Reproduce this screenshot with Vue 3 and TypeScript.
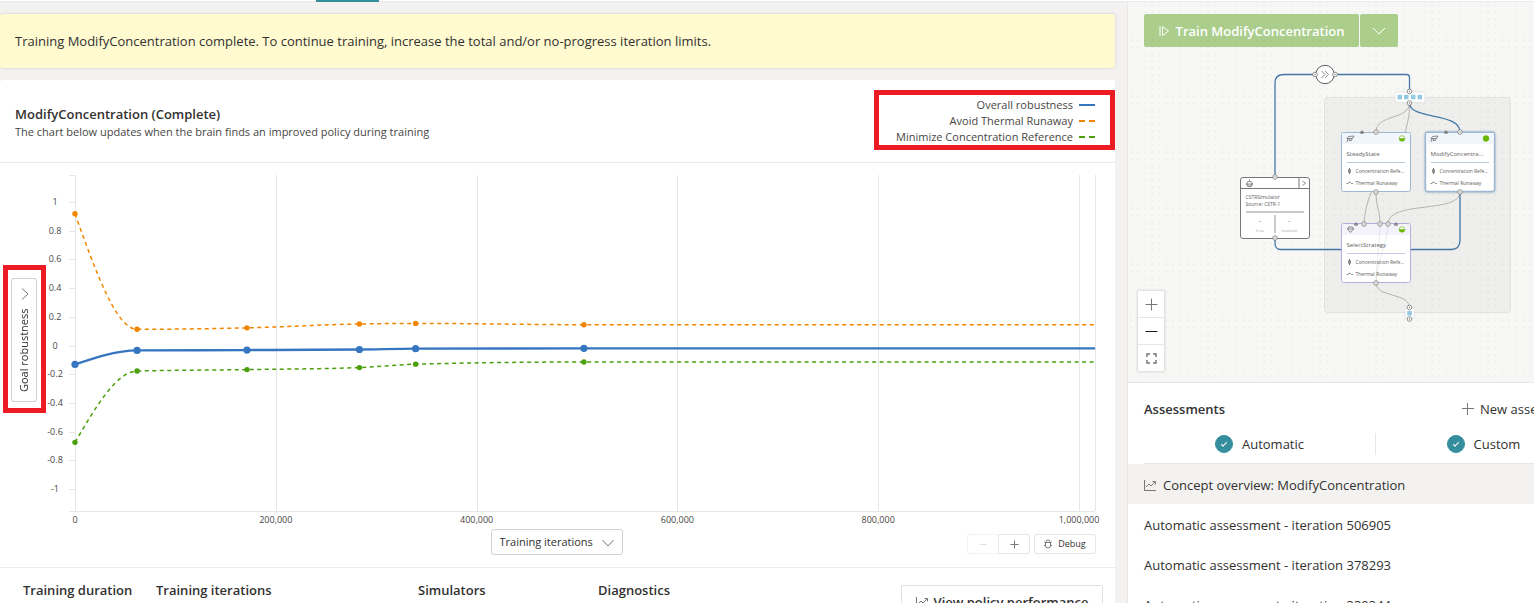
<script setup lang="ts">
import { ref } from 'vue'

type Point = [number, number]

interface Series {
  name: string
  color: string
  width: number
  radius: number
  dashed: boolean
  values: number[]
}

const iterations = [0, 61800, 171300, 283300, 339300, 506905, 1016000]

const series: Series[] = [
  { name: 'Overall robustness', color: '#3676c0', width: 2.4, radius: 3.6, dashed: false, values: [-0.132, -0.034, -0.032, -0.028, -0.022, -0.02, -0.02] },
  { name: 'Avoid Thermal Runaway', color: '#f28500', width: 1.5, radius: 2.7, dashed: true, values: [0.918, 0.113, 0.123, 0.15, 0.154, 0.145, 0.145] },
  { name: 'Minimize Concentration Reference', color: '#4a9f0b', width: 1.5, radius: 2.7, dashed: true, values: [-0.675, -0.178, -0.168, -0.154, -0.13, -0.115, -0.115] },
]

const xOf = (n: number): number => 29 + n * 0.001004
const yOf = (v: number): number => 182.5 - v * 143.5

const xTicks = [0, 200000, 400000, 600000, 800000, 1000000]
const yTicks = [1, 0.8, 0.6, 0.4, 0.2, 0, -0.2, -0.4, -0.6, -0.8, -1]

const pointsOf = (s: Series): Point[] => s.values.map((v, i): Point => [xOf(iterations[i]), yOf(v)])

// Monotone cubic interpolation, so the curve never overshoots a sample.
function curve(p: Point[]): string {
  const n = p.length
  const slope = (i: number): number => (p[i + 1][1] - p[i][1]) / (p[i + 1][0] - p[i][0])
  const tangent: number[] = new Array(n).fill(0)
  for (let i = 1; i < n - 1; i++) {
    const a = slope(i - 1)
    const b = slope(i)
    if (a * b > 0) {
      const h0 = p[i][0] - p[i - 1][0]
      const h1 = p[i + 1][0] - p[i][0]
      const w = (a * h1 + b * h0) / (h0 + h1)
      tangent[i] = Math.sign(a) * Math.min(Math.abs(a), Math.abs(b), 0.5 * Math.abs(w)) * 2
    }
  }
  tangent[0] = (3 * slope(0) - tangent[1]) / 2
  tangent[n - 1] = (3 * slope(n - 2) - tangent[n - 2]) / 2
  let d = `M${p[0][0]} ${p[0][1]}`
  for (let i = 0; i < n - 1; i++) {
    const dx = (p[i + 1][0] - p[i][0]) / 3
    d += `C${p[i][0] + dx} ${p[i][1] + dx * tangent[i]} ${p[i + 1][0] - dx} ${p[i + 1][1] - dx * tangent[i + 1]} ${p[i + 1][0]} ${p[i + 1][1]}`
  }
  return d
}

const plots = [series[1], series[2], series[0]].map((s) => {
  const pts = pointsOf(s)
  return { ...s, d: curve(pts), dots: pts.slice(0, -1) }
})

const concepts = [
  { name: 'SteadyState', x: 213, y: 130, kind: 'learned', full: false },
  { name: 'ModifyConcentra...', x: 297, y: 130, kind: 'learned selected', full: true },
  { name: 'SelectStrategy', x: 213, y: 221, kind: 'selector', full: false },
]

const ports: Point[] = [
  [147, 175], [147, 236], [187, 72.5], [207, 72.5], [281.5, 89.5], [281.5, 101],
  [248, 130], [332, 130], [248, 190], [332, 190],
  [236, 222], [252, 222], [260, 222], [248, 281], [281.5, 305.5], [281.5, 317],
]

const plugs: Point[] = [[234, 130], [318, 130], [228, 222], [268, 222]]

const automatic = ref(true)
const custom = ref(true)
const assessments = [506905, 378293, 339344]
</script>

<template>
  <div class="page">
    <nav class="tabs"><span class="tab-active"></span></nav>

    <main class="train">
      <p class="notice">Training ModifyConcentration complete. To continue training, increase the total and/or no-progress iteration limits.</p>

      <section class="card">
        <header class="card-head">
          <div>
            <h1>ModifyConcentration (Complete)</h1>
            <p>The chart below updates when the brain finds an improved policy during training</p>
          </div>
          <ul class="legend marked">
            <li v-for="s in series" :key="s.name">
              {{ s.name }}
              <svg width="16" height="4" viewBox="0 0 16 4">
                <path d="M0 2H16" :stroke="s.color" stroke-width="2" :stroke-dasharray="s.dashed ? '6 4' : 'none'" />
              </svg>
            </li>
          </ul>
        </header>

        <div class="chart">
          <div class="y-picker marked">
            <select aria-label="Vertical axis">
              <option>Goal robustness</option>
            </select>
            <svg class="y-chevron" width="8" height="14" viewBox="0 0 8 14"><path d="M1 1.5L7 7L1 12.5" /></svg>
          </div>
          <svg class="plot" viewBox="0 0 1069 366" role="img" aria-label="Goal robustness by training iterations">
            <g class="grid">
              <path v-for="t in xTicks" :key="t" :d="`M${Math.round(xOf(t)) + 0.5} 12V348`" />
              <path d="M1049.5 12V348M23 12.5H29M23 348.5H1049" />
              <path v-for="t in yTicks" :key="t" :d="`M23 ${Math.round(yOf(t)) + 0.5}H29`" />
            </g>
            <g class="ticks">
              <text v-for="t in yTicks" :key="t" x="9" :y="yOf(t) + 3">{{ t }}</text>
              <text v-for="t in xTicks" :key="t" :x="xOf(t)" y="360">{{ t.toLocaleString('en-US') }}</text>
            </g>
            <g v-for="p in plots" :key="p.name">
              <path :d="p.d" fill="none" :stroke="p.color" :stroke-width="p.width" :stroke-dasharray="p.dashed ? '4 3.5' : 'none'" />
              <circle v-for="(c, i) in p.dots" :key="i" :cx="c[0]" :cy="c[1]" :r="p.radius" :fill="p.color" />
            </g>
          </svg>
        </div>

        <div class="chart-tools">
          <div class="x-picker">
            <select aria-label="Horizontal axis">
              <option>Training iterations</option>
            </select>
            <svg width="14" height="8" viewBox="0 0 14 8"><path d="M1.5 1L7 7L12.5 1" /></svg>
          </div>
          <div class="tool-buttons">
            <button class="minus" disabled aria-label="Zoom chart out"><svg width="9" height="9" viewBox="0 0 9 9"><path d="M1 4.5H8" /></svg></button>
            <button class="plus" aria-label="Zoom chart in"><svg width="9" height="9" viewBox="0 0 9 9"><path d="M.5 4.5H8.5M4.5 .5V8.5" /></svg></button>
            <button class="debug">
              <svg width="8" height="10" viewBox="0 0 8 10"><path d="M2 3V2.5Q2 1 4 1T6 2.5V3M1.5 3.5H6.5V6.5Q6.5 9 4 9T1.5 6.5ZM0 2.5L1.5 4M8 2.5L6.5 4M0 6.5H1.5M6.5 6.5H8" /></svg>
              Debug
            </button>
          </div>
        </div>

        <footer class="stats">
          <h2>Training duration</h2>
          <h2>Training iterations</h2>
          <h2>Simulators</h2>
          <h2>Diagnostics</h2>
          <button class="policy">
            <svg class="trend" width="12" height="12" viewBox="0 0 12 12"><path d="M.5 1V11.5H12M2 8L5 5L7 7L11 3M8.5 2.5H11.5V5.5" /></svg>
            View policy performance
          </button>
        </footer>
      </section>
    </main>

    <aside class="side">
      <div class="canvas">
        <svg class="graph" width="406" height="380" viewBox="0 0 406 380">
          <rect class="group" x="196.5" y="95.5" width="186" height="215" rx="3" />
          <g class="wire">
            <path d="M281.5 101C281.5 118 248 112 248 130" />
            <path d="M281.5 101C281.5 118 279 120 277.5 130" />
            <path d="M243.5 190C238 202 237 212 236 222" />
            <path d="M248 190C248 206 252 207 252 222" />
            <path d="M332 190C332 212 260 198 260 222" />
            <path d="M248 281C248 296 281.5 290 281.5 306" />
          </g>
          <g class="flow">
            <path d="M147 175V81Q147 72.5 156 72.5H278.5Q281.5 72.5 281.5 76V90" />
            <path d="M281.5 101C281.5 118 332 110 332 130" />
            <path d="M332 190V238Q332 247.5 323 247.5H153Q147 247.5 147 241V236" />
          </g>

          <g class="simulator">
            <rect class="box" x="112.5" y="175.5" width="69" height="61" rx="2.5" />
            <path class="head-line" d="M112.5 186.5H181.5M171 175.5V186.5" />
            <g class="mini">
              <circle cx="121.5" cy="182" r="2.8" />
              <path d="M118 182H125M121.5 179V177.5M120 183V182M123 183V182M119.5 184H123.5M174.5 179L177.5 181.2L174.5 183.5" />
            </g>
            <text x="117.5" y="197">CSTRSimulator</text>
            <text x="117.5" y="204">Source: CSTR-1</text>
            <path class="rule" d="M118 210H176M147 213V231" />
            <text x="130.5" y="221">–</text>
            <text x="160" y="221">–</text>
            <g class="tiny">
              <text x="132" y="230">In use</text>
              <text x="161.5" y="230">Iterations/s</text>
            </g>
          </g>

          <g v-for="c in concepts" :key="c.name" :class="['concept', c.kind]" :transform="`translate(${c.x} ${c.y})`">
            <rect class="box" x=".5" y=".5" width="69" height="59" rx="2" />
            <path class="head" d="M1 2.5Q1 1 2.5 1H67.5Q69 1 69 2.5V12H1Z" />
            <path v-if="c.kind === 'selector'" class="mini" d="M7.5 4H11.5L12.5 6L9.5 9.5L6.5 6ZM6.5 6H12.5" />
            <path v-else class="mini" d="M7.5 4.5L13 4L11.5 6.5L6 6.5ZM7 6.5L6 10M8.5 6.5L8 8.5L10.5 8.5L11 6.5" />
            <circle class="status" cx="61" cy="6.5" r="2.8" />
            <path v-if="c.full" class="status-fill" d="M58 6.5A3 3 0 0 1 64 6.5A3 3 0 0 1 58 6.5Z" />
            <path v-else class="status-fill" d="M58 6.2H64A3 3 0 0 1 58 6.2Z" />
            <text class="name" x="5.5" y="24">{{ c.name }}</text>
            <path class="rule" d="M6 30.5H64" />
            <path class="goal" d="M8.5 36V42M7.5 38L8.5 36.5L9.5 38V40L8.5 41.5L7.5 40ZM5.5 51.5L7 51.5L8 50L9.5 50.5L10.5 51.5L12 51.5" />
            <text x="14.5" y="41">Concentration Refe...</text>
            <text x="14.5" y="53">Thermal Runaway</text>
          </g>
          <path class="ghost" d="M252 222C252 240 248 262 248 281M260 222C260 240 248 262 248 281" />

          <circle class="junction" cx="197" cy="72.5" r="9.2" />
          <path class="junction-mark" d="M193.5 69L197 72.5L193.5 76M197 69L200.5 72.5L197 76" />
          <rect class="pill" x="267" y="90" width="30" height="10.5" rx="1.5" />
          <rect v-for="x in [269.5, 276, 283, 289.5]" :key="x" class="cell" :x="x" y="92.8" width="4.5" height="4.5" />
          <rect class="pill" x="277" y="306" width="9.5" height="10.5" rx="1.5" />
          <rect class="cell" x="279.3" y="309" width="4.5" height="4.5" />
          <g v-for="(p, i) in ports" :key="i" class="port">
            <circle :cx="p[0]" :cy="p[1]" r="2.3" />
            <circle class="core" :cx="p[0]" :cy="p[1]" r=".7" />
          </g>
          <path v-for="(p, i) in plugs" :key="i" class="plug" :d="`M${p[0] - 2} ${p[1] + 1}Q${p[0]} ${p[1] - 3} ${p[0] + 2} ${p[1] + 1}ZM${p[0]} ${p[1] - 1}V${p[1] + 2}`" />
        </svg>

        <div class="train-actions">
          <button class="train-main">
            <svg width="10" height="12" viewBox="0 0 10 12"><path d="M1 1V11M3.5 1.5L9.5 6L3.5 10.5Z" /></svg>
            Train ModifyConcentration
          </button>
          <button class="train-more" aria-label="More training options"><svg width="14" height="8" viewBox="0 0 14 8"><path d="M1 1L7 7L13 1" /></svg></button>
        </div>

        <div class="zoom">
          <button aria-label="Zoom in"><svg width="13" height="13" viewBox="0 0 13 13"><path d="M.5 6.5H12.5M6.5 .5V12.5" /></svg></button>
          <button aria-label="Zoom out"><svg width="13" height="13" viewBox="0 0 13 13"><path class="dark" d="M.5 6.5H12.5" /></svg></button>
          <button aria-label="Fit to view"><svg width="13" height="13" viewBox="0 0 13 13"><path class="thick" d="M2 5V2H5M8 2H11V5M11 8V11H8M5 11H2V8" /></svg></button>
        </div>
      </div>

      <section class="assess">
        <header>
          <h2>Assessments</h2>
          <button class="new">
            <svg width="12" height="12" viewBox="0 0 12 12"><path d="M0 5.5H12M5.5 0V12" /></svg>
            New assessment
          </button>
        </header>
        <div class="filters">
          <label><input v-model="automatic" type="checkbox" />Automatic</label>
          <label><input v-model="custom" type="checkbox" />Custom</label>
        </div>
        <ul class="runs">
          <li class="current">
            <a href="#">
              <svg class="trend" width="12" height="12" viewBox="0 0 12 12"><path d="M.5 1V11.5H12M2 8L5 5L7 7L11 3M8.5 2.5H11.5V5.5" /></svg>
              Concept overview: ModifyConcentration
            </a>
          </li>
          <li v-for="n in assessments" :key="n"><a href="#">Automatic assessment - iteration {{ n }}</a></li>
        </ul>
      </section>
    </aside>
  </div>
</template>

<style>
body {
  margin: 0;
  overflow: hidden;
}
</style>

<style scoped>
.page {
  display: grid;
  grid-template-columns: minmax(0, 1fr) 407px;
  grid-template-rows: auto minmax(0, 1fr);
  height: 100vh;
  overflow: hidden;
  background: #f3f2f1;
  color: #323130;
  font-family: "Open Sans", "Noto Sans", sans-serif;
  font-size: 13px;
  line-height: 20px;
}
h1, h2, p, ul {
  margin: 0;
  padding: 0;
  list-style: none;
}
h1, h2 {
  font-size: 13px;
  font-weight: 600;
  line-height: 20px;
}
button, select, input {
  box-sizing: border-box;
  margin: 0;
  padding: 0;
  border: 0;
  border-radius: 2px;
  background: #fff;
  color: inherit;
  font: inherit;
}
select {
  appearance: none;
}
svg {
  flex: none;
}
button svg path, .x-picker path, .y-chevron path, .trend path {
  fill: none;
  stroke: #797775;
}
.tabs {
  grid-column: 1 / -1;
  box-sizing: border-box;
  height: 2px;
  padding-left: 316px;
  border-bottom: 1px solid #eaeaea;
  background: #fff;
}
.tab-active {
  display: block;
  width: 63px;
  height: 2px;
  background: #358e9d;
}
.train {
  display: flex;
  flex-direction: column;
  gap: 12px;
  padding: 12px 12px 0 0;
}
.notice {
  padding: 17px 15px;
  border-radius: 3px;
  background: #fffad0;
  box-shadow: 0 0 3px rgba(0, 0, 0, .18);
}
.card {
  flex: 1;
  border-radius: 3px;
  background: #fff;
}
.card-head {
  display: flex;
  justify-content: space-between;
  align-items: center;
  box-sizing: border-box;
  height: 83px;
  padding-left: 15px;
  border-bottom: 1px solid #eaeaea;
}
.card-head > div {
  padding-top: 2px;
}
.card-head p {
  font-size: 11px;
  line-height: 16px;
  color: #484644;
}
.marked {
  border: 5px solid #ed1c24;
}
.legend {
  padding: 2px 15px 0 17px;
  margin-bottom: 2px;
  color: #484644;
  font-size: 11px;
  line-height: 16px;
}
.legend li {
  display: flex;
  justify-content: flex-end;
  align-items: center;
  gap: 6px;
}
.chart {
  display: grid;
  grid-template-columns: 46px minmax(0, 1fr);
  align-items: start;
}
.y-picker {
  position: relative;
  display: grid;
  place-items: center;
  box-sizing: border-box;
  width: 43px;
  height: 148px;
  margin: 102px 0 0 3px;
  padding: 2px 2px 0 0;
}
.y-picker select {
  width: 26px;
  height: 124px;
  padding: 9px 0;
  border: 1px solid #d2d0ce;
  border-radius: 3px;
  font-size: 11px;
  line-height: 24px;
  writing-mode: vertical-rl;
  transform: rotate(180deg);
}
.y-chevron {
  position: absolute;
  top: 17px;
  left: 13px;
}
.plot {
  display: block;
  width: 100%;
  overflow: visible;
}
.grid path {
  fill: none;
  stroke: #e6e6e6;
}
.ticks text {
  fill: #484644;
  font-size: 9px;
  text-anchor: middle;
}
.chart-tools {
  display: grid;
  grid-template-columns: 1fr auto 1fr;
  align-items: start;
  padding: 0 19px 12px 17px;
  border-bottom: 1px solid #eaeaea;
}
.x-picker {
  position: relative;
  grid-column: 2;
}
.x-picker select {
  display: block;
  width: 132px;
  height: 26px;
  padding-left: 8px;
  border: 1px solid #d2d0ce;
  border-radius: 3px;
  font-size: 11px;
}
.x-picker svg {
  position: absolute;
  top: 10px;
  right: 8px;
}
.tool-buttons {
  display: flex;
  justify-content: flex-end;
  padding-top: 5px;
  font-size: 9px;
  line-height: 16px;
}
.tool-buttons button {
  display: flex;
  justify-content: center;
  align-items: center;
  gap: 6px;
  width: 32px;
  height: 20px;
  border: 1px solid #e6e6e6;
}
.tool-buttons .minus {
  width: 31px;
  border-right: 0;
  opacity: .5;
}
.tool-buttons .minus path {
  stroke: #c8c6c4;
}
.tool-buttons .debug {
  width: 62px;
  margin-left: 4px;
}
.stats {
  display: grid;
  grid-template-columns: 133px 262px 180px 1fr auto;
  padding: 12px 12px 0 23px;
}
.policy {
  display: flex;
  align-items: center;
  justify-content: center;
  gap: 6px;
  width: 202px;
  height: 34px;
  margin-top: 5px;
  border: 1px solid #e1dfdd;
  font-weight: 600;
}
.side {
  display: flex;
  flex-direction: column;
  min-width: 0;
  overflow: hidden;
  border-left: 1px solid #e6e6e6;
}
.canvas {
  position: relative;
  height: 380px;
  flex: none;
  border-bottom: 1px solid #e6e6e6;
  background: radial-gradient(circle, #eeeeec 1px, transparent 1px) 0 0 / 7px 7px #f7f7f5;
}
.graph {
  display: block;
}
.graph text {
  fill: #605e5c;
  font-size: 5px;
}
.graph .tiny text {
  fill: #a19f9d;
  font-size: 3px;
  text-anchor: middle;
}
.graph .name {
  font-size: 6px;
}
.group {
  fill: rgba(0, 0, 0, .035);
  stroke: #e2e2e2;
}
.wire path, .flow path {
  fill: none;
  stroke: #b3b3b3;
}
.flow path {
  stroke: #4378a6;
  stroke-width: 1.3;
}
.box {
  fill: #fff;
  stroke: #9fb8d2;
}
.head {
  fill: #f0f6fc;
  stroke: none;
}
.selector .box {
  stroke: #b7b0dc;
}
.selector .head {
  fill: #f4f2fb;
}
.selected .box {
  stroke-width: 1.4;
  filter: drop-shadow(0 0 1px #8aa6c4);
}
.simulator .box {
  stroke: #797775;
}
.head-line {
  stroke: #797775;
}
.rule {
  stroke: #b6c8dc;
}
.selector .rule {
  stroke: #cbc7e8;
}
.simulator .rule {
  stroke: #979593;
}
.mini, .goal, .junction-mark, .plug {
  fill: none;
  stroke: #605e5c;
  stroke-width: .7;
}
.status {
  fill: #fff;
  stroke: #6bb700;
  stroke-width: .6;
}
.status-fill {
  fill: #6bb700;
}
.ghost {
  fill: none;
  stroke: #000;
  stroke-opacity: .08;
}
.junction {
  fill: #fff;
  stroke: #605e5c;
}
.pill {
  fill: #fff;
  stroke: #dedede;
  stroke-width: .8;
}
.cell {
  fill: #94c9e3;
}
.port circle {
  fill: #fff;
  stroke: #797775;
  stroke-width: .8;
}
.port .core {
  fill: #797775;
  stroke: none;
}
.train-actions {
  position: absolute;
  top: 12px;
  left: 16px;
  display: flex;
  gap: 1px;
}
.train-actions button {
  display: flex;
  align-items: center;
  justify-content: center;
  gap: 7px;
  width: 215px;
  height: 33px;
  background: rgba(130, 184, 84, .65);
  color: #fff;
  font-size: 13px;
  font-weight: 600;
}
.train-actions .train-more {
  width: 38px;
}
.train-actions button svg path {
  stroke: #fff;
}
.zoom {
  position: absolute;
  top: 289px;
  left: 10px;
  display: flex;
  flex-direction: column;
  gap: 1px;
  background: #e6e6e6;
  box-shadow: 0 0 2px 1px rgba(0, 0, 0, .12);
}
.zoom button {
  display: grid;
  place-items: center;
  width: 26px;
  height: 26px;
  border-radius: 0;
}
.zoom button .dark {
  stroke: #201f1e;
}
.zoom button .thick {
  stroke-width: 1.5;
}
.assess {
  flex: 1;
  width: 460px;
  background: #fff;
}
.assess header {
  display: flex;
  justify-content: space-between;
  align-items: center;
  padding: 16px 0 14px 16px;
}
.new {
  display: flex;
  align-items: center;
  gap: 6px;
  width: 126px;
  white-space: nowrap;
}
.filters {
  display: grid;
  grid-template-columns: 231px 216px;
  height: 30px;
  margin-left: 16px;
  border-bottom: 1px solid #e6e6e6;
}
.filters label {
  display: flex;
  align-items: center;
  justify-content: center;
  gap: 9px;
  height: 22px;
}
.filters label + label {
  border-left: 1px solid #e6e6e6;
}
.filters input {
  display: grid;
  place-items: center;
  width: 18px;
  height: 18px;
  appearance: none;
  border: 1px solid #358e9d;
  border-radius: 50%;
}
.filters input:checked {
  background: #358e9d;
}
.filters input:checked::after {
  content: "";
  width: 5px;
  height: 2px;
  margin-bottom: 2px;
  border: solid #fff;
  border-width: 0 0 1px 1px;
  transform: rotate(-45deg);
}
.runs a {
  display: flex;
  align-items: center;
  gap: 7px;
  height: 40px;
  padding: 1px 16px 0;
  box-sizing: border-box;
  color: inherit;
  text-decoration: none;
}
.runs .current {
  background: #f3f2f1;
}
</style>
